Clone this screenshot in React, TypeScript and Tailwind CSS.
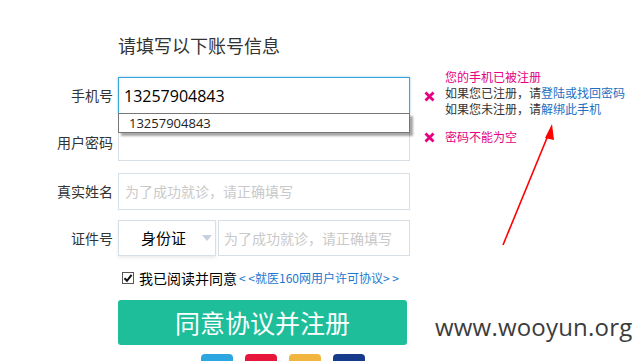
import React from 'react';

const cjk = 'font-["Microsoft_YaHei","Noto_Sans_CJK_SC",sans-serif]';

function Cross({ className = '' }: { className?: string }) {
    return (
        <svg width="11" height="11" viewBox="0 0 11 11" className={`shrink-0 ${className}`}>
            <path d="M1.5 1.5 L9.5 9.5 M9.5 1.5 L1.5 9.5" stroke="#e4007f" strokeWidth="2.8" />
        </svg>
    );
}

function Label({ children }: { children: React.ReactNode }) {
    return <span className="w-[68px] pr-[5px] text-right text-[14px] text-[#333] shrink-0">{children}</span>;
}

const placeholder = '为了成功就诊，请正确填写';

export default function App() {
    return (
        <div className={`relative w-[641px] h-[361px] overflow-hidden bg-white ${cjk}`}>
            <div className="pl-[50px] pt-[33px]">
                <h2 className="ml-[68px] text-[18px] leading-[24px] text-[#333]">请填写以下账号信息</h2>

                {/* phone */}
                <div className="flex items-center mt-[20px] h-[37px]">
                    <Label>手机号</Label>
                    <div className="relative w-[292px] h-[37px] border border-[#3aa3d8] shadow-[0_0_2px_rgba(58,163,216,0.6)] flex items-center pl-[5px] text-[16px] text-black font-['Open_Sans',sans-serif]">
                        13257904843
                        <div className="absolute z-10 left-[-1px] top-[35px] w-[292px] h-[20px] bg-white border border-[#777] shadow-[3px_3px_2px_rgba(0,0,0,0.35)] pl-[10px] text-[13px] leading-[18px] text-[#222]">
                            13257904843
                        </div>
                    </div>
                </div>

                {/* password */}
                <div className="flex items-center mt-[10px] h-[37px]">
                    <Label>用户密码</Label>
                    <div className="w-[292px] h-[37px] border border-[#d6dee6]" />
                </div>

                {/* real name */}
                <div className="flex items-center mt-[12px] h-[37px]">
                    <Label>真实姓名</Label>
                    <div className="w-[292px] h-[37px] border border-[#d6dee6] flex items-center pl-[6px] text-[14px] text-[#c9c9c9]">
                        {placeholder}
                    </div>
                </div>

                {/* id type */}
                <div className="flex items-center mt-[10px] h-[36px]">
                    <Label>证件号</Label>
                    <div className="w-[98px] h-[36px] border border-[#d6dee6] shadow-[0_2px_3px_rgba(0,0,0,0.08)] flex items-center pl-[22px] text-[15px] text-black">
                        <span>身份证</span>
                        <svg width="10" height="6" viewBox="0 0 10 6" className="ml-[16px]">
                            <path d="M0 0 L10 0 L5 6 Z" fill="#c5d1dc" />
                        </svg>
                    </div>
                    <div className="ml-[2px] w-[192px] h-[36px] border border-[#d6dee6] flex items-center pl-[5px] text-[14px] text-[#c9c9c9]">
                        {placeholder}
                    </div>
                </div>

                {/* agree */}
                <div className="flex items-center ml-[72px] mt-[16px] h-[12px]">
                    <span className="w-[12px] h-[12px] border border-[#555] bg-white flex items-center justify-center">
                        <svg width="10" height="10" viewBox="0 0 10 10">
                            <path d="M1.5 5.2 L4 7.8 L8.6 1.8" stroke="#111" strokeWidth="2" fill="none" />
                        </svg>
                    </span>
                    <span className="ml-[5px] text-[14px] text-black leading-none">我已阅读并同意</span>
                    <span className="ml-[2px] text-[12px] text-[#1e78cf] leading-none whitespace-pre">&lt; &lt;就医160网用户许可协议&gt; &gt;</span>
                </div>

                {/* submit */}
                <button className="ml-[68px] mt-[16px] w-[289px] h-[45px] rounded-[3px] bg-[#1ebe9a] text-white text-[25px] leading-none">
                    同意协议并注册
                </button>

                {/* share icons */}
                <div className="flex gap-[12px] ml-[151px] mt-[9px]">
                    <span className="w-[32px] h-[20px] rounded-t-[4px] bg-[#2ba6e1]" />
                    <span className="w-[32px] h-[20px] rounded-t-[4px] bg-[#e6173a]" />
                    <span className="w-[32px] h-[20px] rounded-t-[4px] bg-[#f2b53f]" />
                    <span className="w-[32px] h-[20px] rounded-t-[4px] bg-[#173b8b]" />
                </div>
            </div>

            {/* error tips */}
            <div className="absolute left-[424px] top-[69px] flex items-start gap-[10px] text-[12px] leading-[16px]">
                <Cross className="mt-[22px]" />
                <div>
                    <p className="text-[#e4007f]">您的手机已被注册</p>
                    <p className="text-[#333]">如果您已注册，请<span className="text-[#1e6fbf]">登陆或找回密码</span></p>
                    <p className="text-[#333]">如果您未注册，请<span className="text-[#1e6fbf]">解绑此手机</span></p>
                </div>
            </div>
            <div className="absolute left-[424px] top-[129px] flex items-center gap-[10px] text-[12px] leading-[16px]">
                <Cross />
                <p className="text-[#e4007f]">密码不能为空</p>
            </div>

            {/* red annotation arrow */}
            <svg className="absolute left-0 top-0" width="641" height="361">
                <line x1="503" y1="245" x2="549" y2="133" stroke="#ff0000" strokeWidth="1.6" />
                <path d="M552 124 L545 138 L554 140 Z" fill="#ff0000" />
            </svg>

            {/* watermark */}
            <div className="absolute left-[435px] top-[311px] text-[24px] leading-[32px] tracking-[0.2px] text-[#3c3c3c] font-['Open_Sans',sans-serif]">
                www.wooyun.org
            </div>
        </div>
    );
}
